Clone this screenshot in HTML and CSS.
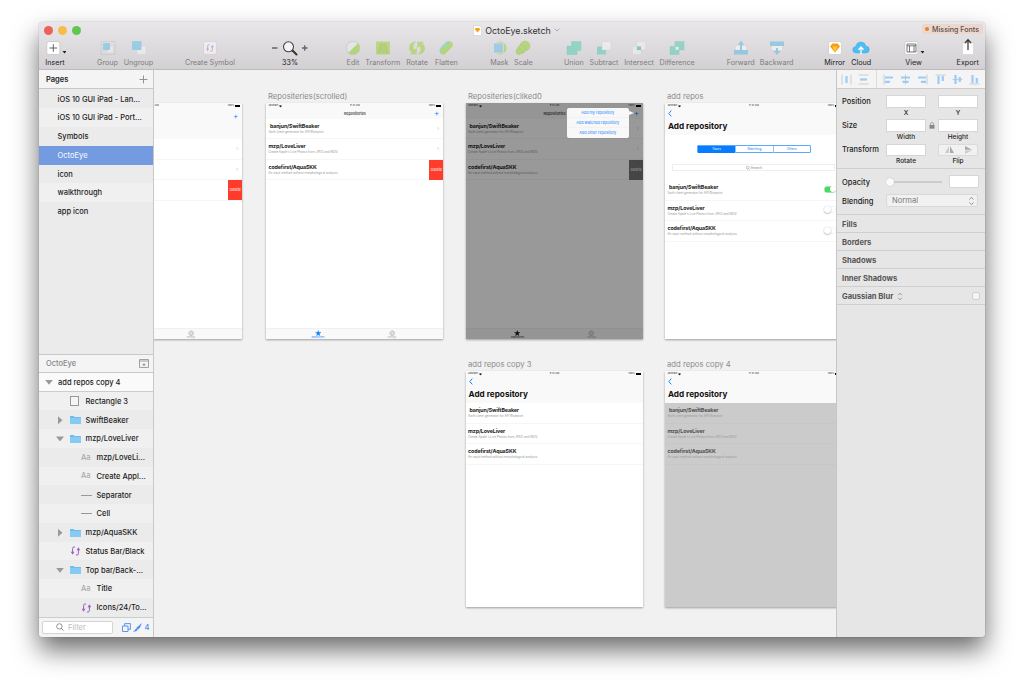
FILE: index.html
```html
<!DOCTYPE html>
<html lang="en">
<head>
    <meta charset="UTF-8">
    <meta name="viewport" content="width=device-width, initial-scale=1.0">
    <title>OctoEye.sketch</title>
    <link rel="stylesheet" href="styles.css">
</head>
<body>

    <!-- Shared icons -->
    <svg class="defs" width="0" height="0">
        <symbol id="folder" viewBox="0 0 12 10"><path d="M0 1.2Q0 .6.6.6H4l1 1h6.4q.6 0 .6.6V9H0z" fill="#6dbdec"/><path d="M0 2.8h12v6.4H0z" fill="#86cbf3"/></symbol>
        <symbol id="sync" viewBox="0 0 12 12"><path d="M5.500 1.200H4Q2.500 1.200 2.500 3v5M6.500 10.800H8q1.500 0 1.500-1.800V4" fill="none" stroke="currentColor" stroke-width="1.200"/><path d="M.3 7h4.400L2.500 10.500zM7.300 5h4.400L9.500 1.500z" fill="currentColor"/></symbol>
        <symbol id="wifi" viewBox="0 0 6 5"><path d="M0 1.500Q3-1 6 1.500L3 5z" fill="#222"/></symbol>
        <symbol id="star" viewBox="0 0 10 10"><path d="M5 0l1.300 3.500H10L7 5.800 8.100 9.500 5 7.300 1.900 9.500 3 5.800 0 3.500h3.700z" fill="currentColor"/></symbol>
        <symbol id="gear" viewBox="0 0 10 10"><circle cx="5" cy="5" r="3.700" fill="none" stroke="currentColor" stroke-width="1.200" stroke-dasharray="1.500 .4"/><circle cx="5" cy="5" r="2" fill="none" stroke="currentColor"/></symbol>
        <symbol id="back" viewBox="0 0 4 7"><path d="M3.300.6L.8 3.500l2.500 2.900" fill="none" stroke="#1584ff"/></symbol>
        <symbol id="updown" viewBox="0 0 6 10"><path d="M1 3.500L3 1.300l2 2.200M1 6.500l2 2.200 2-2.200" fill="none" stroke="#888" stroke-width=".9"/></symbol>
    </svg>

    <div class="window">
        <header class="toolbar">
            <div class="titlebar">
                <div class="lights"><i class="red"></i><i class="yellow"></i><i class="green"></i></div>
                <div class="title">
                    <svg width="9" height="11" viewBox="0 0 9 11"><path d="M.5.5h6l2 2v8h-8z" fill="#fff" stroke="#ccc" stroke-width=".6"/><path d="M1.700 4.200l1.200-1.200h3.200l1.200 1.200L4.500 7.600z" fill="#f7a21b"/></svg>
                    <span>OctoEye.sketch</span>
                    <svg width="6" height="4" viewBox="0 0 6 4"><path d="M.6.8L3 3.100 5.400.8" fill="none" stroke="#999" stroke-width=".8"/></svg>
                </div>
                <div class="missing"><i></i>Missing Fonts</div>
            </div>
            <div class="tools">
                <div class="group g-insert">
                    <div class="tool"><svg class="insert-icon" width="20" height="16" viewBox="0 0 20 16"><rect x=".8" y="1.500" width="13" height="13" rx="2" fill="#fff" stroke="#bbb" stroke-width=".6"/><path d="M7.300 4.200v7.600M3.500 8h7.600" stroke="#555" stroke-width=".9"/><path d="M16.500 11h4l-2 2.500z" fill="#222"/></svg><span>Insert</span></div>
                </div>
                <div class="group g-group off">
                    <div class="tool"><svg width="16" height="16" viewBox="0 0 16 16"><path d="M1 1.500h14v13H1z" fill="none" stroke="#aaa" stroke-width=".5"/><rect x="7" y="6" width="6.500" height="7" rx="1" fill="#f4f4f4" stroke="#ccc" stroke-width=".4"/><rect x="3" y="3" width="7" height="7" rx="1" fill="#59bfe8"/></svg><span>Group</span></div>
                    <div class="tool"><svg width="16" height="16" viewBox="0 0 16 16"><rect x="6" y="6" width="9" height="8.500" rx="1" fill="#f8f8f8" stroke="#ccc" stroke-width=".4"/><rect x="1" y="1" width="9.500" height="9" rx="1" fill="#59bfe8"/></svg><span>Ungroup</span></div>
                </div>
                <div class="group g-symbol off">
                    <div class="tool symbol"><svg width="16" height="16" viewBox="0 0 16 16"><rect x="1.500" y="1.500" width="13" height="13" rx="2" fill="#fff" stroke="#bbb" stroke-width=".5"/><use href="#sync" x="4" y="4" width="8" height="8"/></svg><span>Create Symbol</span></div>
                </div>
                <div class="group g-zoom">
                    <div class="tool"><svg width="40" height="16" viewBox="0 0 40 16"><path d="M2 8h5.500M32 8h5.500M34.700 5.200v5.600" stroke="#666" stroke-width="1.300"/><path d="M22.500 10.500l4 4" stroke="#333" stroke-width="2" stroke-linecap="round"/><circle cx="18.500" cy="6.800" r="5" fill="#f2f5f8" stroke="#444" stroke-width="1.100"/></svg><span>33%</span></div>
                </div>
                <div class="group g-edit off">
                    <div class="tool"><svg width="16" height="16" viewBox="0 0 16 16"><circle cx="8" cy="8" r="6.700" fill="#eee" stroke="#999" stroke-width=".5"/><path d="M3.300 12.700L13 3.300a6.700 6.700 0 0 1-9.700 9.400z" fill="#8fd020"/></svg><span>Edit</span></div>
                    <div class="tool"><svg width="16" height="16" viewBox="0 0 16 16"><path d="M1 1.500h14v13H1z" fill="#9ed22e"/><path d="M3 13.500L5.500 4h5L13 13.500" fill="#8bc81e" stroke="#6ba516" stroke-width=".6"/></svg><span>Transform</span></div>
                    <div class="tool"><svg width="18" height="16" viewBox="0 0 18 16"><path d="M7.500 1.500Q.5 3 1.500 9q.5 2.500 2.500 3.500L2.500 14h6V8.500L6.500 10Q3 7 7.500 1.500zM10.500 14.500q7-1.500 6-7.500Q16 4.500 14 3.500L15.500 2h-6v5.500l2-1.500q3.500 3-1 8.500z" fill="#9bd321" stroke="#7fb519" stroke-width=".3"/></svg><span>Rotate</span></div>
                    <div class="tool"><svg width="16" height="16" viewBox="0 0 16 16"><path d="M4 6l4-4q3-2 5 0 2.500 2.500.5 5l-6 6.500q-3 2-5 0-2.500-3 1.500-7.500z" fill="#56cfb3"/><path d="M2 11L12 1.500q4 1 2.500 5l-8 8Q2.500 14.500 2 11z" fill="#93d020"/></svg><span>Flatten</span></div>
                </div>
                <div class="group g-mask off">
                    <div class="tool"><svg width="16" height="16" viewBox="0 0 16 16"><circle cx="9" cy="8" r="6.500" fill="#95d021"/><rect x="2.500" y="3" width="10" height="10" rx="1" fill="#66bde9" stroke="#fff" stroke-width=".5"/></svg><span>Mask</span></div>
                    <div class="tool"><svg width="16" height="16" viewBox="0 0 16 16"><g fill="#92d020" stroke="#76ae1c" stroke-width=".4"><circle cx="10" cy="6" r="5"/><circle cx="6.500" cy="9.200" r="4.200"/><circle cx="4" cy="11.500" r="3"/></g></svg><span>Scale</span></div>
                </div>
                <div class="group g-union off">
                    <div class="tool"><svg width="16" height="16" viewBox="0 0 16 16"><path d="M5.500 1.500H15v9h-4v4H1V6h4.500z" fill="#4ccdb0" stroke="#3bb59a" stroke-width=".4"/></svg><span>Union</span></div>
                    <div class="tool"><svg width="16" height="16" viewBox="0 0 16 16"><path d="M1 6.500h9v8H1z" fill="#4ccdb0"/><rect x="6" y="1.500" width="9" height="8.500" rx="1" fill="#fafafa" stroke="#bbb" stroke-width=".4"/></svg><span>Subtract</span></div>
                    <div class="tool"><svg width="16" height="16" viewBox="0 0 16 16"><g fill="#f6f6f6" stroke="#ccc" stroke-width=".4"><path d="M6 1.500h8.500V10H6zM1.500 6.500H10v8H1.500z"/></g><path d="M6 6.500h4V10H6z" fill="#31b99a"/></svg><span>Intersect</span></div>
                    <div class="tool"><svg width="16" height="16" viewBox="0 0 16 16"><path d="M6 1.500h9V10H6zM1 6.500h9v8H1z" fill="#4ccdb0" stroke="#3bb59a" stroke-width=".4"/><path d="M6.300 6.700h3.500v3.200H6.300z" fill="#e8f5f2"/></svg><span>Difference</span></div>
                </div>
                <div class="group g-order off">
                    <div class="tool"><svg width="16" height="16" viewBox="0 0 16 16"><path d="M3 6h10v4H3z" fill="#fff"/><path d="M8 .8l3.300 4H9V10h6v4.500H1V10h6V4.800H4.700z" fill="#52b8e4"/></svg><span>Forward</span></div>
                    <div class="tool"><svg width="16" height="16" viewBox="0 0 16 16"><path d="M3 6h10v4H3z" fill="#fff"/><path d="M1 1.500h14V6H1zM7 8h2v3h2.500L8 15l-3.500-4H7z" fill="#52b8e4"/></svg><span>Backward</span></div>
                </div>
                <div class="group g-cloud">
                    <div class="tool"><svg width="16" height="16" viewBox="0 0 16 16"><rect x="1.500" y="1.500" width="13" height="13" rx="2" fill="#fff" stroke="#c5c5c5" stroke-width=".6"/><path d="M5.300 3.500h5.400L13 6.500l-5 6-5-6z" fill="#f6a01a"/><path d="M5.500 6.500h5L8 12z" fill="#ffca35"/></svg><span>Mirror</span></div>
                    <div class="tool"><svg width="18" height="16" viewBox="0 0 18 16"><path d="M4.500 13Q.7 13 .7 9.700q0-2.700 3-3.200Q4.500 2 9 2q4 0 4.700 3.900 3.600.2 3.600 3.600 0 3.500-3.800 3.500z" fill="#4fbdf3" stroke="#2ba4e0" stroke-width=".4"/><path d="M9 14.500V7.500M6.500 9.800L9 7l2.500 2.800" fill="none" stroke="#fff" stroke-width="1.300"/></svg><span>Cloud</span></div>
                </div>
                <div class="group g-view">
                    <div class="tool"><svg class="view-icon" width="20" height="16" viewBox="0 0 20 16"><rect x=".8" y="1.500" width="13" height="13" rx="2" fill="#fff" stroke="#bbb" stroke-width=".6"/><path d="M3 4h9v8H3zM3 5.800h9M5.500 5.800V12M10 5.800V12" fill="none" stroke="#555" stroke-width=".8"/><path d="M16.500 11h4l-2 2.500z" fill="#222"/></svg><span>View</span></div>
                </div>
                <div class="group g-export">
                    <div class="tool"><svg width="16" height="18" viewBox="0 0 16 18"><rect x="2.500" y="5" width="11" height="11.500" rx="1" fill="#fff" stroke="#c8c8c8" stroke-width=".5"/><path d="M8 12V2M5 5l3-3.400L11 5" fill="none" stroke="#333" stroke-width="1.200"/></svg><span>Export</span></div>
                </div>
            </div>
        </header>

        <main class="body">
            <aside class="sidebar">
                <div class="side-head"><b>Pages</b><svg width="9" height="9" viewBox="0 0 9 9"><path d="M4.500.5v8M.5 4.500h8" stroke="#888" stroke-width=".9"/></svg></div>
                <ul class="pages">
                    <li>iOS 10 GUI iPad - Lan...</li>
                    <li>iOS 10 GUI iPad - Port...</li>
                    <li>Symbols</li>
                    <li class="selected">OctoEye</li>
                    <li>icon</li>
                    <li>walkthrough</li>
                    <li>app icon</li>
                </ul>
                <div class="side-head layers-head"><span>OctoEye</span><svg width="10" height="9" viewBox="0 0 10 9"><path d="M.5.5h9v8h-9zM.5 2h9" fill="none" stroke="#999" stroke-width=".9"/><path d="M3.200 6.500L5 4.200l1.800 2.300z" fill="#888"/></svg></div>
                <div class="artboard-row"><i class="tri down"></i>add repos copy 4</div>
                <ul class="layers">
                    <li><i class="tri none"></i><i class="ico rect"></i>Rectangle 3</li>
                    <li><i class="tri right"></i><svg class="ico"><use href="#folder"/></svg>SwiftBeaker</li>
                    <li><i class="tri down"></i><svg class="ico"><use href="#folder"/></svg>mzp/LoveLiver</li>
                    <li class="child"><i class="ico aa">Aa</i>mzp/LoveLi...</li>
                    <li class="child"><i class="ico aa">Aa</i>Create Appl...</li>
                    <li class="child"><i class="ico line"></i>Separator</li>
                    <li class="child"><i class="ico line"></i>Cell</li>
                    <li><i class="tri right"></i><svg class="ico"><use href="#folder"/></svg>mzp/AquaSKK</li>
                    <li><i class="tri none"></i><svg class="ico purple"><use href="#sync"/></svg>Status Bar/Black</li>
                    <li><i class="tri down"></i><svg class="ico"><use href="#folder"/></svg>Top bar/Back-...</li>
                    <li class="child"><i class="ico aa">Aa</i>Title</li>
                    <li class="child"><svg class="ico purple"><use href="#sync"/></svg>Icons/24/To...</li>
                </ul>
                <div class="filter">
                    <div class="filter-box"><svg width="8" height="8" viewBox="0 0 8 8"><circle cx="3.400" cy="3.400" r="2.700" fill="none" stroke="#777" stroke-width=".8"/><path d="M5.300 5.300l2.200 2.200" stroke="#777" stroke-width=".9"/></svg>Filter</div>
                    <svg width="9" height="9" viewBox="0 0 9 9"><path d="M.5 3h5.500v5.500H.5zM2.700 3V.6h5.700v5.700H6" fill="none" stroke="#4a8df0" stroke-width=".9"/></svg>
                    <svg width="9" height="9" viewBox="0 0 9 9"><path d="M8.500.5L6.500 5 5 6.300 3.500 5zM3.200 5.500l1.500 1.200Q3.500 8.500.5 8.500 2 7.500 3.200 5.500z" fill="#4a8df0" stroke="#4a8df0" stroke-width=".4"/></svg>
                    <span>4</span>
                </div>
            </aside>

            <section class="canvas">
                <!-- Repositories, cut by the sidebar -->
                <div class="artboard b1">
                    <div class="status"><span></span><span>9:41 AM</span><span>100% <i class="battery"></i></span></div>
                    <div class="nav large"><span class="plus">+</span></div>
                    <div class="row"><em>›</em></div>
                    <div class="row"><em>›</em></div>
                    <div class="row"><span class="delete">Delete</span></div>
                    <div class="tabs"><div></div><div><svg><use href="#gear"/></svg>Settings</div></div>
                </div>

                <h2 class="l2">Repositeries(scrolled)</h2>
                <div class="artboard b2">
                    <div class="status"><span>Abstract <svg width="3" height="2.500"><use href="#wifi"/></svg></span><span>9:41 AM</span><span>100% <i class="battery"></i></span></div>
                    <div class="nav">Repositories<span class="plus">+</span></div>
                    <div class="row first"><b>banjun/SwiftBeaker</b><small>Swift client generator for API Blueprint</small><em>›</em></div>
                    <div class="row"><b>mzp/LoveLiver</b><small>Create Apple's Live Photos from JPEG and MOV.</small><em>›</em></div>
                    <div class="row"><b>codefirst/AquaSKK</b><small>An input method without morphological analysis.</small><span class="delete">Delete</span></div>
                    <div class="tabs"><div class="active"><svg><use href="#star"/></svg>Repositories</div><div><svg><use href="#gear"/></svg>Settings</div></div>
                </div>

                <h2 class="l3">Repositeries(cliked0</h2>
                <div class="artboard b3">
                    <div class="status"><span>Abstract <svg width="3" height="2.500"><use href="#wifi"/></svg></span><span>9:41 AM</span><span>100% <i class="battery"></i></span></div>
                    <div class="nav">Repositories<span class="plus">+</span></div>
                    <div class="row first"><b>banjun/SwiftBeaker</b><small>Swift client generator for API Blueprint</small><em>›</em></div>
                    <div class="row"><b>mzp/LoveLiver</b><small>Create Apple's Live Photos from JPEG and MOV.</small><em>›</em></div>
                    <div class="row"><b>codefirst/AquaSKK</b><small>An input method without morphological analysis.</small><span class="delete dark">Delete</span></div>
                    <div class="tabs"><div class="black"><svg><use href="#star"/></svg>Repositories</div><div><svg><use href="#gear"/></svg>Settings</div></div>
                    <div class="dim"></div>
                    <div class="popover"><span>Add my repository</span><span>Add watched repository</span><span>Add other repository</span></div>
                </div>

                <h2 class="l4">add repos</h2>
                <div class="artboard b4">
                    <div class="status"><span>Abstract <svg width="3" height="2.500"><use href="#wifi"/></svg></span><span>9:41 AM</span><span>100% <i class="battery"></i></span></div>
                    <div class="heading"><svg width="4" height="7"><use href="#back"/></svg><h3>Add repository</h3></div>
                    <div class="segments"><span class="on">Yours</span><span>Watching</span><span>Others</span></div>
                    <div class="search"><svg width="4" height="4" viewBox="0 0 8 8"><circle cx="3.400" cy="3.400" r="2.700" fill="none" stroke="#888"/><path d="M5.300 5.300l2.200 2.200" stroke="#888"/></svg>Search</div>
                    <div class="row first"><b>banjun/SwiftBeaker</b><small>Swift client generator for API Blueprint</small><i class="switch on"></i></div>
                    <div class="row"><b>mzp/LoveLiver</b><small>Create Apple's Live Photos from JPEG and MOV.</small><i class="switch"></i></div>
                    <div class="row"><b>codefirst/AquaSKK</b><small>An input method without morphological analysis.</small><i class="switch"></i></div>
                </div>

                <h2 class="l5">add repos copy 3</h2>
                <div class="artboard b5">
                    <div class="status"><span>Abstract <svg width="3" height="2.500"><use href="#wifi"/></svg></span><span>9:41 AM</span><span>100% <i class="battery"></i></span></div>
                    <div class="heading"><svg width="4" height="7"><use href="#back"/></svg><h3>Add repository</h3></div>
                    <div class="row first"><b>banjun/SwiftBeaker</b><small>Swift client generator for API Blueprint</small></div>
                    <div class="row"><b>mzp/LoveLiver</b><small>Create Apple's Live Photos from JPEG and MOV.</small></div>
                    <div class="row"><b>codefirst/AquaSKK</b><small>An input method without morphological analysis.</small></div>
                </div>

                <h2 class="l6">add repos copy 4</h2>
                <div class="artboard b6">
                    <div class="status"><span>Abstract <svg width="3" height="2.500"><use href="#wifi"/></svg></span><span>9:41 AM</span><span>100% <i class="battery"></i></span></div>
                    <div class="heading"><svg width="4" height="7"><use href="#back"/></svg><h3>Add repository</h3></div>
                    <div class="disabled">
                        <div class="row first"><b>banjun/SwiftBeaker</b><small>Swift client generator for API Blueprint</small></div>
                        <div class="row"><b>mzp/LoveLiver</b><small>Create Apple's Live Photos from JPEG and MOV.</small></div>
                        <div class="row"><b>codefirst/AquaSKK</b><small>An input method without morphological analysis.</small></div>
                    </div>
                </div>
            </section>

            <aside class="inspector">
                <div class="align">
                    <svg viewBox="0 0 11 11"><path d="M1 .5v10M10 .5v10" stroke="#ccc"/><path d="M5.500 2v7" stroke="#9accfb" stroke-width="2.200"/></svg>
                    <svg viewBox="0 0 11 11"><path d="M.5 1h10M.5 10h10" stroke="#ccc"/><path d="M2 5.500h7" stroke="#9accfb" stroke-width="2.200"/></svg>
                    <i></i>
                    <svg viewBox="0 0 11 11"><path d="M1 .5v10" stroke="#ccc"/><path d="M2 3.500h8M2 7.800h5" stroke="#9accfb" stroke-width="2.200"/></svg>
                    <svg viewBox="0 0 11 11"><path d="M5.500 .5v10" stroke="#ccc"/><path d="M1 3.500h9M2.500 7.800h6" stroke="#9accfb" stroke-width="2.200"/></svg>
                    <svg viewBox="0 0 11 11"><path d="M10 .5v10" stroke="#ccc"/><path d="M1 3.500h8M4 7.800h5" stroke="#9accfb" stroke-width="2.200"/></svg>
                    <svg viewBox="0 0 11 11"><path d="M.5 1h10" stroke="#ccc"/><path d="M3.500 2v8M7.800 2v5" stroke="#9accfb" stroke-width="2.200"/></svg>
                    <svg viewBox="0 0 11 11"><path d="M.5 5.500h10" stroke="#ccc"/><path d="M3.500 1v9M7.800 3v5" stroke="#9accfb" stroke-width="2.200"/></svg>
                    <svg viewBox="0 0 11 11"><path d="M.5 10h10" stroke="#ccc"/><path d="M3.500 1v8M7.800 4v5" stroke="#9accfb" stroke-width="2.200"/></svg>
                </div>
                <div class="geometry">
                    <label>Position</label><div class="field"></div><i></i><div class="field"></div>
                    <span class="c2">X</span><span class="c4">Y</span>
                    <label>Size</label><div class="field"></div><svg width="6" height="7" viewBox="0 0 6 7"><path d="M.5 3h5v3.700h-5z" fill="#888"/><path d="M1.500 3V1.800q0-1.300 1.500-1.300t1.500 1.300V3" fill="none" stroke="#999" stroke-width=".8"/></svg><div class="field"></div>
                    <span class="c2">Width</span><span class="c4">Height</span>
                    <label>Transform</label><div class="field"></div><i></i><div class="flip"><svg width="9" height="7" viewBox="0 0 9 7"><path d="M4 0v7H0z" fill="#ccc"/><path d="M5 0v7h4z" fill="#aaa"/></svg><svg width="7" height="8" viewBox="0 0 7 8"><path d="M0 0l7 3.700H0z" fill="#aaa"/><path d="M0 4.400h7L0 8z" fill="#ccc"/></svg></div>
                    <span class="c2">Rotate</span><span class="c4">Flip</span>
                </div>
                <div class="appearance">
                    <div class="line"><label>Opacity</label><div class="slider"><i></i></div><div class="field"></div></div>
                    <div class="line"><label>Blending</label><div class="select">Normal<svg width="7" height="10"><use href="#updown"/></svg></div></div>
                </div>
                <div class="fold">Fills</div>
                <div class="fold">Borders</div>
                <div class="fold">Shadows</div>
                <div class="fold">Inner Shadows</div>
                <div class="fold">Gaussian Blur<svg width="6" height="9"><use href="#updown"/></svg><i class="check"></i></div>
            </aside>
        </main>
    </div>

</body>
</html>
```
FILE: styles.css
```css
* {
    box-sizing: border-box;
}

body {
    margin: 0;
    height: 693px;
    padding: 22px 39px 56px;
    background: #fff;
    overflow: hidden;
    font-family: Inter, "Liberation Sans", sans-serif;
    font-size: 7.5px;
    color: #1c1c1c;
}

ul, h2, h3 {
    margin: 0;
    padding: 0;
    list-style: none;
}

i, em {
    font-style: normal;
}

svg {
    display: block;
    flex: none;
}

.defs {
    position: absolute;
}

.window {
    width: 946px;
    height: 615px;
    display: flex;
    flex-direction: column;
    border-radius: 4px;
    box-shadow: 0 0 1px rgba(0, 0, 0, 0.5), 0 13px 26px rgba(0, 0, 0, 0.58);
}

/* Toolbar */
.toolbar {
    height: 48px;
    background: linear-gradient(to bottom, #e9e7e9, #d2d0d2);
    border-bottom: 1px solid #bcbabc;
    border-radius: 4px 4px 0 0;
}

.titlebar {
    height: 16px;
    display: grid;
    grid-template-columns: 1fr auto 1fr;
    align-items: center;
    padding: 0 2px 0 5px;
}

.lights {
    display: flex;
    gap: 5px;
}

.lights i {
    width: 9px;
    height: 9px;
    border-radius: 50%;
}

.red { background: #ee6156; }
.yellow { background: #f5be4b; }
.green { background: #5fc751; }

.title {
    display: flex;
    align-items: center;
    gap: 3.5px;
    padding-left: 6px;
    font-size: 8.9px;
    color: #333;
}

.missing {
    justify-self: end;
    display: flex;
    align-items: center;
    gap: 3px;
    height: 10px;
    margin-top: -2px;
    padding: 0 4px 0 3px;
    background: #ebd7cd;
    border-radius: 2px;
    font-size: 7.1px;
    font-weight: 500;
    color: #5c4e48;
    white-space: nowrap;
}

.missing i {
    width: 4px;
    height: 4px;
    border-radius: 50%;
    background: #f07c28;
}

.tools {
    display: flex;
    padding-left: 6px;
}

.group {
    display: grid;
    column-gap: 6px;
    flex: none;
}

.g-insert { grid-template-columns: 20px; }
.g-group { grid-template-columns: 21px 29px; margin-left: 32px; }
.g-symbol { grid-template-columns: 50px; margin-left: 32px; }
.g-zoom { grid-template-columns: 40px; margin-left: 35px; }
.g-edit { grid-template-columns: 14px 34px 23px 24px; margin-left: 36px; column-gap: 5.8px; }
.g-mask { grid-template-columns: 18px 18px; margin-left: 32px; }
.g-union { grid-template-columns: 20px 29px 30px 35px; margin-left: 31.5px; column-gap: 5.6px; }
.g-order { grid-template-columns: 27px 33px; margin-left: 32.5px; }
.g-cloud { grid-template-columns: 20px 21px; margin-left: 31.5px; }
.g-view { grid-template-columns: 16px; margin-left: 34px; }
.g-export { grid-template-columns: 20px; margin-left: 36px; }

.tool {
    display: flex;
    flex-direction: column;
    align-items: center;
    justify-content: flex-end;
    height: 30px;
    font-size: 7.2px;
    line-height: 10px;
    white-space: nowrap;
}

.tool span {
    margin-top: 2px;
}

.off span {
    color: #7f7d7f;
}

.off svg {
    opacity: 0.5;
}

.symbol svg {
    color: #c44fd8;
}

.insert-icon {
    margin-left: 1px;
}

.view-icon {
    margin-left: 1px;
}

/* Body */
.body {
    flex: 1;
    min-height: 0;
    display: flex;
}

.sidebar {
    width: 115px;
    display: flex;
    flex-direction: column;
    background: #ebebeb;
    border-right: 1px solid #c8c8c8;
    border-radius: 0 0 0 4px;
    font-weight: 500;
}

.side-head {
    height: 19px;
    flex: none;
    display: flex;
    align-items: center;
    justify-content: space-between;
    padding: 0 5px 0 7px;
    background: #f4f4f4;
    border-bottom: 1px solid #c8c8c8;
}

.side-head b {
    font-weight: 600;
}

.side-head span {
    color: #888;
}

.layers-head {
    padding-right: 4px;
    border-top: 1px solid #c8c8c8;
}

.pages {
    flex: 1;
    padding-top: 0.5px;
}

.pages li {
    height: 18.75px;
    line-height: 19.5px;
    padding-left: 18.5px;
    white-space: nowrap;
}

.pages li:nth-child(even),
.layers li:nth-child(odd) {
    background: #f0f0f0;
}

.pages li.selected {
    background: #749bdf;
    color: #e8effc;
}

.artboard-row {
    height: 18.5px;
    display: flex;
    align-items: center;
    gap: 5px;
    padding: 1px 0 0 6px;
    background: #fafafa;
    border-bottom: 1px solid #ccc;
}

.layers li {
    height: 18.75px;
    display: flex;
    align-items: center;
    padding: 1px 0 0 17px;
    white-space: nowrap;
}

.layers li.child {
    padding-left: 42px;
}

.tri {
    width: 8px;
    height: 8px;
}

.tri.down {
    height: 5px;
    background: #999;
    clip-path: polygon(0 0, 100% 0, 50% 100%);
}

.tri.right {
    background: #999;
    clip-path: polygon(25% 0, 81% 50%, 25% 100%);
}

.ico {
    width: 11px;
    height: 10px;
    margin: 0 5px 0 5.5px;
}

.child .ico {
    margin-left: 0;
    margin-right: 4.5px;
}

.ico.rect {
    width: 9px;
    border: 1px solid #999;
    background: #f5f5f5;
    margin: 0 6.5px 0 6px;
}

.ico.aa {
    color: #aaa;
    line-height: 10px;
}

.ico.line {
    height: 1px;
    background: #999;
}

.purple {
    color: #9a5fc0;
}

.filter {
    height: 20.5px;
    flex: none;
    display: flex;
    align-items: center;
    gap: 2.5px;
    padding-left: 3px;
    background: #f4f4f4;
    border-top: 1px solid #ccc;
    border-radius: 0 0 0 4px;
    color: #4a8df0;
}

.filter-box {
    width: 71px;
    height: 13px;
    display: flex;
    align-items: center;
    gap: 4px;
    margin-right: 6px;
    padding-left: 13px;
    border: 1px solid #d5d5d5;
    border-radius: 2px;
    background: #fff;
    color: #bbb;
    font-weight: 400;
}

/* Canvas */
.canvas {
    flex: 1;
    position: relative;
    overflow: hidden;
    background: #f1f1f1;
}

.canvas h2 {
    position: absolute;
    font-size: 7.7px;
    font-weight: 400;
    line-height: 10px;
    color: #8c8c8c;
}

.l2 { left: 114px; top: 22px; }
.l3 { left: 314px; top: 22px; }
.l4 { left: 513px; top: 22px; }
.l5 { left: 314px; top: 290px; }
.l6 { left: 513px; top: 290px; }

.artboard {
    position: absolute;
    width: 177px;
    height: 236px;
    display: flex;
    flex-direction: column;
    background: #fff;
    box-shadow: 0 0.5px 2px rgba(0, 0, 0, 0.35);
}

.b1 { left: -88.6px; top: 33px; }
.b2 { left: 112.4px; top: 33px; }
.b3 { left: 312px; top: 33px; }
.b4 { left: 511.4px; top: 33px; }
.b5 { left: 312px; top: 301px; }
.b6 { left: 511.4px; top: 301px; }

.status {
    height: 5.5px;
    flex: none;
    display: grid;
    grid-template-columns: 1fr auto 1fr;
    align-items: center;
    padding: 1px 2px 0;
    background: #f9f9f9;
    font-size: 2.5px;
    line-height: 4px;
    color: #222;
}

.status span {
    display: flex;
    align-items: center;
    gap: 1px;
}

.status span:last-child {
    justify-content: flex-end;
}

.battery {
    width: 5px;
    height: 2px;
    background: #000;
}

.nav {
    position: relative;
    height: 10px;
    flex: none;
    background: #f9f9f9;
    text-align: center;
    font-size: 3.7px;
    font-weight: 500;
    line-height: 10px;
}

.nav.large {
    height: 30.5px;
}

.nav.large .plus {
    top: 2px;
}

.plus {
    position: absolute;
    right: 4px;
    top: -0.5px;
    color: #1584ff;
    font-size: 8px;
    font-weight: 400;
}

.row {
    position: relative;
    height: 20.5px;
    flex: none;
    display: flex;
    flex-direction: column;
    padding: 4px 0 0 2px;
    border-bottom: 0.5px solid #f6f6f6;
}

.row b {
    font-size: 5.3px;
    line-height: 7px;
    letter-spacing: -0.1px;
}

.row.first b {
    padding-left: 1.5px;
}

.row small {
    font-size: 3.05px;
    line-height: 5px;
    color: #999;
}

.row em {
    position: absolute;
    right: 4px;
    top: 5px;
    font-size: 6px;
    color: #ccc;
}

.delete {
    position: absolute;
    right: 0;
    top: 0;
    width: 14px;
    height: 20px;
    background: #ff3b2b;
    color: #fff;
    font-size: 3.7px;
    line-height: 20px;
    text-align: center;
}

.delete.dark {
    background: #737373;
}

.tabs {
    height: 11px;
    margin-top: auto;
    display: flex;
    justify-content: center;
    gap: 48px;
    background: #f9f9f9;
    border-top: 0.5px solid #f0f0f0;
    font-size: 2.2px;
    line-height: 3px;
    color: #aaa;
}

.tabs div {
    width: 26px;
    display: flex;
    flex-direction: column;
    align-items: center;
}

.tabs svg {
    width: 6.5px;
    height: 6.5px;
    margin-top: 0.8px;
}

.tabs .active {
    color: #1584ff;
}

.tabs .black {
    color: #222;
}

.dim {
    position: absolute;
    inset: 0;
    background: rgba(0, 0, 0, 0.4);
}

.popover {
    position: absolute;
    left: 100.5px;
    top: 5px;
    width: 62.5px;
    height: 30px;
    display: grid;
    grid-template-rows: 10px 10px 10px;
    background: #f8f8f8;
    border-radius: 2px;
    color: #1584ff;
    font-size: 3.8px;
    line-height: 10px;
    text-align: center;
}

.popover::after {
    content: "";
    position: absolute;
    left: 62.5px;
    top: 3px;
    border-left: 5px solid #f8f8f8;
    border-top: 2.5px solid transparent;
    border-bottom: 2.5px solid transparent;
}

.popover span + span {
    box-shadow: 0 -0.5px 0 #ececec;
}

.heading {
    height: 26.5px;
    flex: none;
    padding: 1px 0 0 2.5px;
    background: #f9f9f9;
}

.heading h3 {
    margin-top: 4px;
    font-size: 8.2px;
    font-weight: 700;
    line-height: 11px;
    color: #111;
}

.segments {
    width: 114px;
    height: 8px;
    flex: none;
    display: grid;
    grid-template-columns: 1fr 1fr 1fr;
    margin: 10px auto 0;
    border: 0.5px solid #5aa9ff;
    border-radius: 1px;
    color: #1584ff;
    font-size: 3.2px;
    line-height: 7px;
    text-align: center;
}

.segments span + span {
    border-left: 1px solid #8dc3ff;
}

.segments .on {
    background: #087cff;
    color: #fff;
}

.search {
    width: 163px;
    height: 7px;
    flex: none;
    display: flex;
    align-items: center;
    justify-content: center;
    gap: 1px;
    margin: 11px auto 9px;
    border: 1px solid #eee;
    font-size: 3.5px;
    color: #888;
}

.switch {
    position: absolute;
    right: 6px;
    top: 5.5px;
    width: 12px;
    height: 7px;
    border-radius: 4px;
    box-shadow: inset 0 0 0 0.5px #eee;
}

.switch::after {
    content: "";
    position: absolute;
    left: 0;
    top: 0;
    width: 7px;
    height: 7px;
    border-radius: 50%;
    background: #fff;
    box-shadow: 0 0.5px 1.5px rgba(0, 0, 0, 0.4);
}

.switch.on {
    background: #4cd864;
}

.switch.on::after {
    left: 5.5px;
    top: 0.5px;
    width: 6px;
    height: 6px;
    box-shadow: none;
}

.disabled {
    flex: 1;
    background: #cbcbcb;
}

.disabled .row {
    border-color: #c7c7c7;
}

.disabled b {
    color: #505050;
}

/* Inspector */
.inspector {
    width: 149px;
    background: #e6e6e6;
    border-left: 1px solid #c6c6c6;
    border-radius: 0 0 4px 0;
    font-weight: 500;
}

.align {
    height: 19px;
    display: flex;
    align-items: center;
    justify-content: space-between;
    padding: 0 5px 0 4px;
    background: #f4f4f4;
    border-bottom: 1px solid #ccc;
}

.align svg {
    width: 11px;
    height: 11px;
}

.align i {
    width: 1px;
    height: 18px;
    background: #ddd;
}

.geometry {
    height: 80px;
    display: grid;
    grid-template-columns: 44px 40px 12px 40px;
    grid-template-rows: 12.5px 11.8px 12.5px 11.8px 12.5px 11.8px;
    align-items: center;
    justify-items: stretch;
    padding: 6px 0 0 5px;
    border-bottom: 1px solid #cfcfcf;
}

.geometry svg {
    justify-self: center;
}

.geometry span {
    text-align: center;
    font-size: 6.5px;
    line-height: 8px;
    padding-bottom: 1px;
}

.c2 { grid-column: 2; }
.c4 { grid-column: 4; }

.field {
    height: 12.5px;
    background: #fff;
    border: 1px solid #d6d6d6;
}

.flip {
    height: 12px;
    display: flex;
    align-items: center;
    justify-content: space-around;
    background: #f1f1f1;
    border: 1px solid #dadada;
    border-radius: 2px;
}

.appearance {
    height: 46px;
    padding-top: 3px;
    border-bottom: 1px solid #cfcfcf;
}

.line {
    height: 19px;
    display: flex;
    align-items: center;
    padding-left: 5px;
}

.line label {
    width: 44px;
    padding-top: 1px;
}

.line .field {
    width: 30px;
}

.slider {
    width: 56px;
    height: 2px;
    margin-right: 7px;
    display: flex;
    align-items: center;
    background: #ccc;
}

.slider i {
    width: 8px;
    height: 8px;
    border-radius: 50%;
    background: #fafafa;
    box-shadow: 0 0 1px #999;
}

.select {
    width: 92px;
    height: 13.5px;
    display: flex;
    align-items: center;
    justify-content: space-between;
    padding: 0 2px 0 5px;
    background: #f1f1f1;
    border: 1px solid #d8d8d8;
    border-radius: 2px;
    color: #777;
    font-size: 7.6px;
    font-weight: 400;
}

.fold {
    height: 18px;
    display: flex;
    align-items: center;
    gap: 4px;
    padding: 1px 5px 0;
    border-bottom: 1px solid #cfcfcf;
    font-size: 7.6px;
    font-weight: 700;
    color: #555;
}

.check {
    width: 8px;
    height: 8px;
    margin-left: auto;
    background: #f5f5f5;
    border: 1px solid #d0d0d0;
    border-radius: 2px;
}
```
